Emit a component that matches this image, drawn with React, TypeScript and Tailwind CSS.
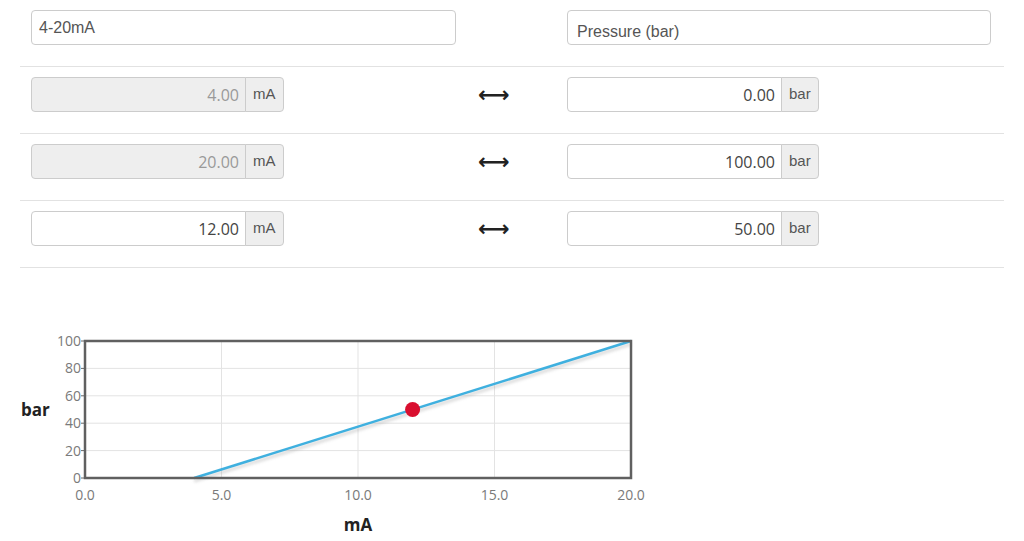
import React from "react";

const sans = "font-['Liberation_Sans',Arial,sans-serif]";
const num = "font-['Open_Sans',sans-serif]";

type Side = { value: string; unit: string; disabled?: boolean };

const rows: { left: Side; right: Side }[] = [
  { left: { value: "4.00", unit: "mA", disabled: true }, right: { value: "0.00", unit: "bar" } },
  { left: { value: "20.00", unit: "mA", disabled: true }, right: { value: "100.00", unit: "bar" } },
  { left: { value: "12.00", unit: "mA" }, right: { value: "50.00", unit: "bar" } },
];

function UnitInput({ side }: { side: Side }) {
  return (
    <div className="flex h-[35px]">
      <div
        className={
          "flex w-[215px] items-center justify-end rounded-l-[4px] border border-[#ccc] pr-[6px] text-[16px] " +
          num +
          (side.disabled ? " bg-[#eeeeee] text-[#999]" : " bg-white text-[#444]")
        }
      >
        {side.value}
      </div>
      <div
        className={
          "-ml-px flex items-center rounded-r-[4px] border border-[#ccc] bg-[#eeeeee] px-[7px] text-[15px] text-[#555] " +
          sans
        }
      >
        {side.unit}
      </div>
    </div>
  );
}

function Chart() {
  const x0 = 85, x1 = 631, yTop = 342, yBot = 479;
  const px = (v: number) => x0 + (v / 20) * (x1 - x0);
  const py = (v: number) => yBot - (v / 100) * (yBot - yTop);
  const yTicks = [0, 20, 40, 60, 80, 100];
  const xTicks = [0, 5, 10, 15, 20];
  return (
    <svg width={660} height={272} viewBox="0 269 660 272" className="block">
      <defs>
        <filter id="sh" x="-10%" y="-50%" width="120%" height="200%">
          <feGaussianBlur stdDeviation="1.5" />
        </filter>
      </defs>
      {yTicks.slice(1, -1).map((t) => (
        <line key={t} x1={x0} x2={x1} y1={py(t)} y2={py(t)} stroke="#e3e3e3" strokeWidth={1} />
      ))}
      {xTicks.slice(1, -1).map((t) => (
        <line key={t} x1={px(t)} x2={px(t)} y1={yTop} y2={yBot} stroke="#e3e3e3" strokeWidth={1} />
      ))}
      {yTicks.map((t) => (
        <g key={t}>
          <line x1={x0 - 4} x2={x0} y1={py(t)} y2={py(t)} stroke="#666" strokeWidth={1} />
          <text
            x={x0 - 4}
            y={py(t) + 5}
            textAnchor="end"
            fontSize={14}
            fill="#7a7a7a"
            fontFamily="Open Sans, sans-serif"
          >
            {t}
          </text>
        </g>
      ))}
      {xTicks.map((t) => (
        <text
          key={t}
          x={px(t)}
          y={501}
          textAnchor="middle"
          fontSize={14}
          fill="#7a7a7a"
          fontFamily="Open Sans, sans-serif"
        >
          {t.toFixed(1)}
        </text>
      ))}
      <line x1={px(4)} y1={py(0) + 3} x2={x1} y2={yTop + 3} stroke="#999" strokeWidth={3} opacity={0.35} filter="url(#sh)" />
      <line x1={px(4)} y1={py(0)} x2={x1} y2={yTop} stroke="#3fb0df" strokeWidth={2.5} />
      <rect x={x0} y={yTop} width={x1 - x0} height={yBot - yTop} fill="none" stroke="#606060" strokeWidth={2.5} />
      <circle cx={px(12)} cy={py(50)} r={7.5} fill="#d90f2f" />
      <text x={21} y={417} fontSize={17} fontWeight="bold" fill="#222" fontFamily="Open Sans, sans-serif">
        bar
      </text>
      <text x={358} y={532} textAnchor="middle" fontSize={17} fontWeight="bold" fill="#222" fontFamily="Open Sans, sans-serif">
        mA
      </text>
    </svg>
  );
}

export default function App() {
  return (
    <div className="h-[541px] w-[1024px] overflow-hidden bg-white">
      <div className="mx-[20px]">
        <div className="flex border-b border-[#e2e2e2] px-[11px] pb-[21px] pt-[10px]">
          <div
            className={
              "flex h-[35px] w-[425px] items-center rounded-[4px] border border-[#ccc] pl-[7px] pr-[10px] pt-[1px] text-[16px] text-[#555] " +
              sans
            }
          >
            4-20mA
          </div>
          <div className="w-[111px]" />
          <div
            className={
              "flex h-[35px] w-[424px] items-center rounded-[4px] border border-[#ccc] pl-[9px] pr-[8px] pt-[8px] text-[16px] text-[#555] " +
              sans
            }
          >
            Pressure (bar)
          </div>
        </div>
        {rows.map((r, i) => (
          <div key={i} className="flex items-center border-b border-[#e2e2e2] px-[11px] pb-[21px] pt-[10px]">
            <div className="w-[425px]">
              <UnitInput side={r.left} />
            </div>
            <div className="flex w-[111px] items-center pl-[22px] text-[22px] font-bold leading-none text-[#222] font-['DejaVu_Sans',sans-serif]">
              ⟷
            </div>
            <div className="w-[424px]">
              <UnitInput side={r.right} />
            </div>
          </div>
        ))}
      </div>
      <Chart />
    </div>
  );
}
